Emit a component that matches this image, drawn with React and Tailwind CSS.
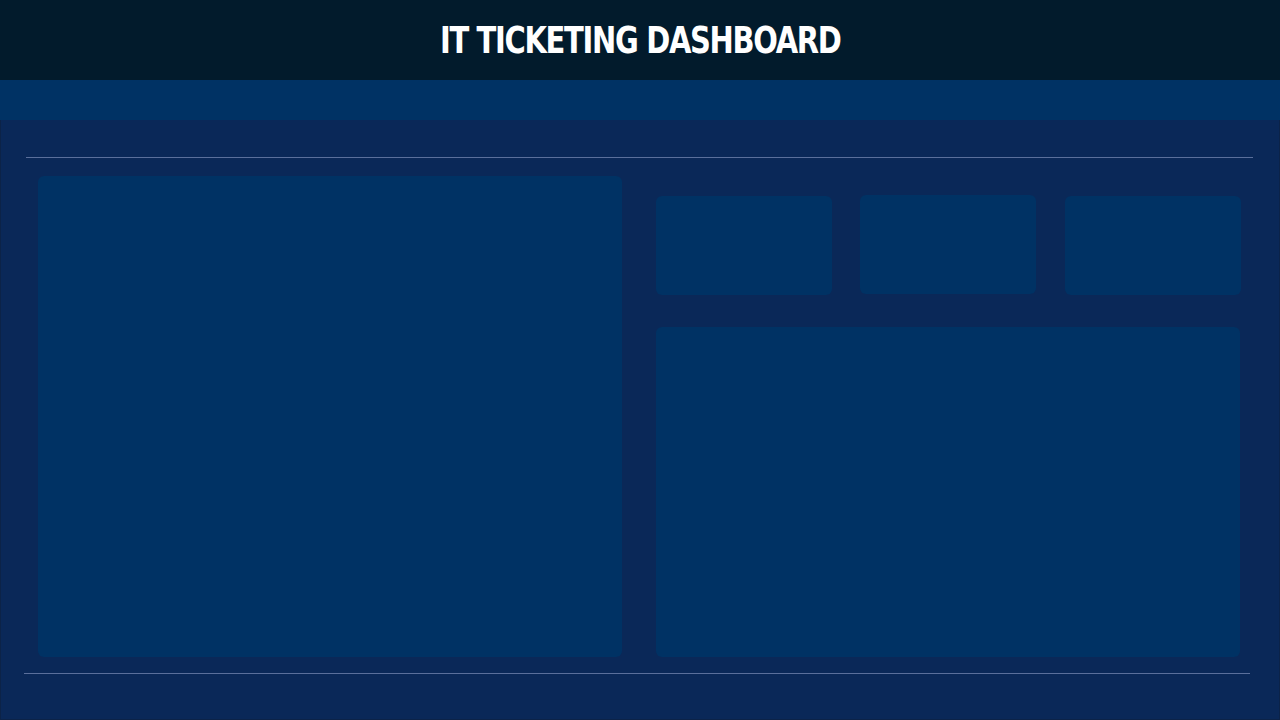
export default function App() {
  return (
    <div className="w-[1280px] h-[720px] overflow-hidden bg-[#0a2858] flex flex-col">
      {/* Title bar */}
      <header className="h-[80px] bg-[#021b2c] flex items-center justify-center">
        <h1 className="text-white text-[37px] font-bold tracking-[-1.5px] leading-none scale-x-[0.87] font-['DejaVu_Sans_Condensed','DejaVu_Sans',sans-serif] pt-[1px]">
          IT TICKETING DASHBOARD
        </h1>
      </header>

      {/* Filter band */}
      <div className="h-[40px] bg-[#003264]"></div>

      {/* Main area */}
      <main className="flex-1 border-x border-b border-[#0c2348] bg-[#0a2858] pt-[37px] px-[23px]">
        <div className="ml-[2px] w-[1227px] h-px bg-[#5a6f9b]"></div>

        <div className="mt-[18px] ml-[14px] flex gap-[34px]">
          <div className="w-[584px] h-[481px] rounded-md bg-[#003264]"></div>

          <div className="w-[585px] pt-[19px] flex flex-col">
            <div className="flex h-[100px]">
              <div className="w-[176px] h-[99px] mt-[1px] rounded-md bg-[#003264]"></div>
              <div className="ml-[28px] w-[176px] h-[99px] rounded-md bg-[#003264]"></div>
              <div className="ml-[29px] w-[176px] h-[99px] mt-[1px] rounded-md bg-[#003264]"></div>
            </div>
            <div className="mt-[32px] w-[584px] h-[330px] rounded-md bg-[#003264]"></div>
          </div>
        </div>

        <div className="mt-[16px] w-[1226px] h-px bg-[#5a6f9b]"></div>
      </main>
    </div>
  );
}
